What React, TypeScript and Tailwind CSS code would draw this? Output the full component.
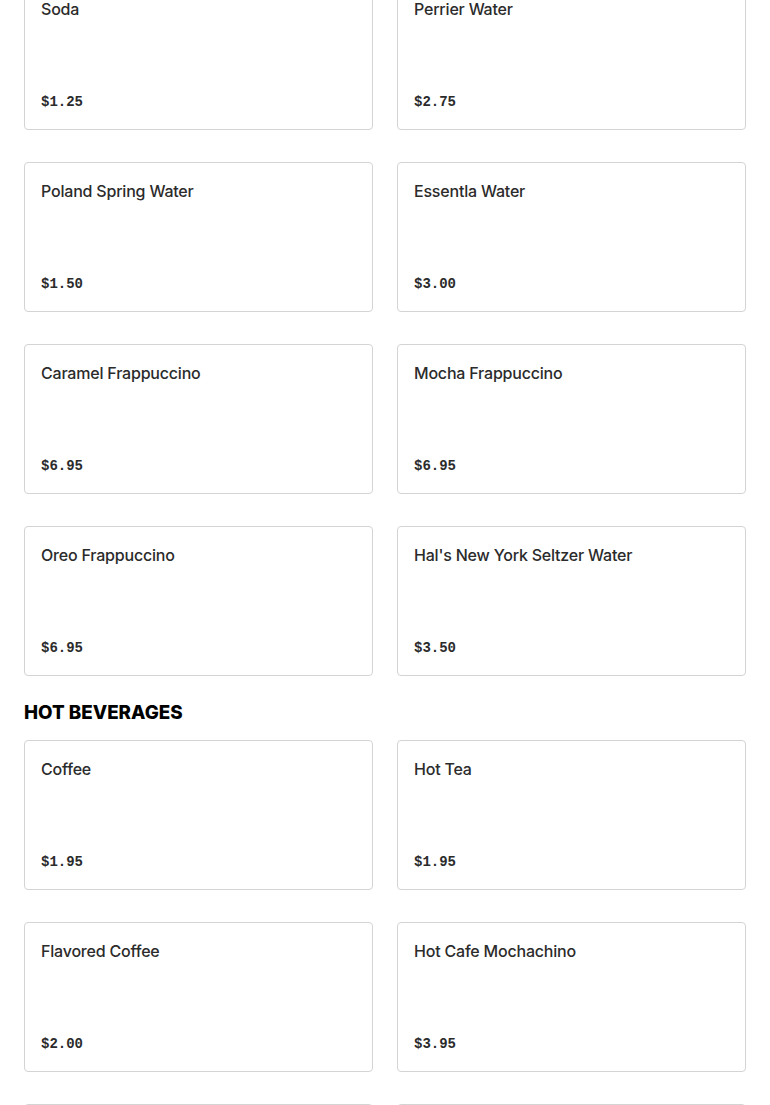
import React from "react";

interface MenuItem {
  name: string;
  price: string;
}

const coldItems: MenuItem[] = [
  { name: "Soda", price: "$1.25" },
  { name: "Perrier Water", price: "$2.75" },
  { name: "Poland Spring Water", price: "$1.50" },
  { name: "Essentla Water", price: "$3.00" },
  { name: "Caramel Frappuccino", price: "$6.95" },
  { name: "Mocha Frappuccino", price: "$6.95" },
  { name: "Oreo Frappuccino", price: "$6.95" },
  { name: "Hal's New York Seltzer Water", price: "$3.50" },
];

const hotItems: MenuItem[] = [
  { name: "Coffee", price: "$1.95" },
  { name: "Hot Tea", price: "$1.95" },
  { name: "Flavored Coffee", price: "$2.00" },
  { name: "Hot Cafe Mochachino", price: "$3.95" },
  { name: "", price: "" },
  { name: "", price: "" },
];

const ItemCard: React.FC<{ item: MenuItem }> = ({ item }) => (
  <div className="h-[150px] flex flex-col justify-between rounded border border-[#d4d4d4] bg-white px-4 pt-4 pb-[17px]">
    <div className="h-6 text-[16px] leading-6 font-medium text-[#2b2b2b] font-['Inter',sans-serif] tracking-[-0.2px]">
      {item.name}
    </div>
    <div className="h-5 text-[14px] leading-5 font-bold text-[#2b2b2b] font-['Liberation_Mono',monospace]">
      {item.price}
    </div>
  </div>
);

export default function App() {
  return (
    <div className="min-h-screen bg-white px-6 overflow-hidden">
      <div className="-mt-5 grid grid-cols-2 gap-x-6 gap-y-8">
        {coldItems.map((item, index) => (
          <ItemCard key={index} item={item} />
        ))}
      </div>
      <h2 className="mt-[23px] mb-[13px] text-[18.8px] leading-7 font-extrabold uppercase text-black font-['Inter',sans-serif]">
        Hot Beverages
      </h2>
      <div className="grid grid-cols-2 gap-x-6 gap-y-8">
        {hotItems.map((item, index) => (
          <ItemCard key={index} item={item} />
        ))}
      </div>
    </div>
  );
}
